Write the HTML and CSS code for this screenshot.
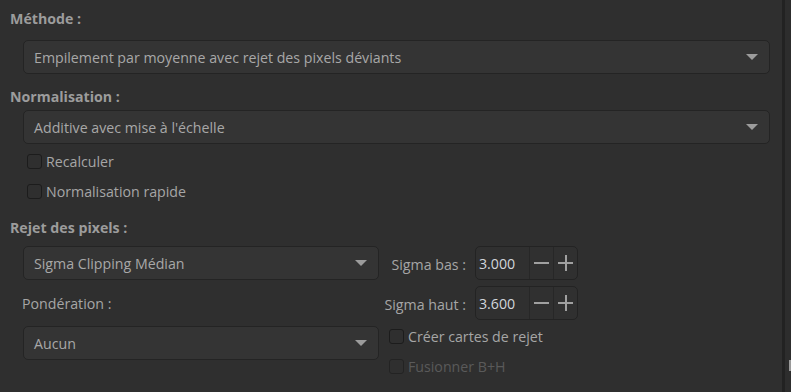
FILE: index.html
```html
<!DOCTYPE html>
<html lang="fr">
<head>
<meta charset="utf-8">
<link rel="stylesheet" href="styles.css">
</head>
<body>
<div class="window">
  <div class="panel">
    <div class="section-title first">Méthode :</div>
    <div class="combo wide"><span>Empilement par moyenne avec rejet des pixels déviants</span><i class="arrow"></i></div>

    <div class="section-title second">Normalisation :</div>
    <div class="combo wide"><span>Additive avec mise à l'échelle</span><i class="arrow"></i></div>
    <div class="checks">
      <label class="check"><i class="box"></i>Recalculer</label>
      <label class="check"><i class="box"></i>Normalisation rapide</label>
    </div>

    <div class="section-title third">Rejet des pixels :</div>
    <div class="rejet">
      <div class="combo"><span>Sigma Clipping Médian</span><i class="arrow"></i></div>
      <div class="spin-label">Sigma bas :</div>
      <div class="spin"><span class="val">3.000</span><span class="btn minus"></span><span class="btn plus"></span></div>

      <div class="plain-label">Pondération :</div>
      <div class="spin-label">Sigma haut :</div>
      <div class="spin"><span class="val">3.600</span><span class="btn minus"></span><span class="btn plus"></span></div>

      <div class="combo"><span>Aucun</span><i class="arrow"></i></div>
      <div class="right-checks">
        <label class="check"><i class="box"></i>Créer cartes de rejet</label>
        <label class="check disabled"><i class="box"></i>Fusionner B+H</label>
      </div>
    </div>
  </div>
  <div class="divider"></div>
  <div class="side"><div class="thumb"></div></div>
</div>
</body>
</html>
```
FILE: styles.css
```css
html, body {
  margin: 0;
  padding: 0;
  background: #2f2f2f;
  height: 392px;
  overflow: hidden;
}
body {
  font-family: "Open Sans", "Noto Sans", sans-serif;
  font-size: 14.2px;
  color: #a6a6a6;
}
.window {
  display: flex;
  height: 392px;
}
.panel {
  width: 770px;
  padding-left: 10px;
  padding-right: 2px;
  box-sizing: content-box;
}
.divider {
  width: 3px;
  background: #222222;
}
.side {
  flex: 1;
  background: #2d2d2d;
  display: flex;
  justify-content: flex-end;
  padding-top: 360px;
}
.thumb {
  width: 2px;
  height: 11px;
  background: #9a9a9a;
}
.section-title {
  font-weight: 700;
  color: #9c9c9c;
  height: 20px;
  line-height: 20px;
}
.section-title.first {
  margin-top: 9px;
  margin-bottom: 11px;
}
.section-title.second {
  margin-top: 13px;
  margin-bottom: 3px;
}
.section-title.third {
  margin-top: 12px;
  margin-bottom: 8px;
}
.combo {
  box-sizing: border-box;
  height: 34px;
  border: 1px solid #242424;
  border-radius: 5px;
  background: #343434;
  display: flex;
  align-items: center;
  justify-content: space-between;
  padding: 0 11px 0 10px;
  color: #a8a8a8;
}
.combo.wide {
  margin-left: 13px;
  width: 747px;
}
.arrow {
  width: 0;
  height: 0;
  border-left: 6px solid transparent;
  border-right: 6px solid transparent;
  border-top: 6px solid #9c9c9c;
}
.checks {
  margin-left: 17px;
  margin-top: 2px;
}
.check {
  display: flex;
  align-items: center;
  height: 30px;
  color: #a6a6a6;
}
.box {
  box-sizing: border-box;
  width: 15px;
  height: 15px;
  border: 1px solid #1c1c1c;
  border-radius: 3px;
  background: #2f2f2f;
  margin-right: 4px;
}
.check.disabled {
  color: #5a5a5a;
}
.check.disabled .box {
  border-color: #232323;
}
.rejet {
  margin-left: 13px;
  display: grid;
  grid-template-columns: 356px 96px 103px;
  grid-template-rows: 34px 34px 34px;
  row-gap: 6px;
}
.spin-label {
  text-align: right;
  padding-right: 9px;
  align-self: center;
  padding-top: 2px;
}
.plain-label {
  align-self: center;
  margin-left: -1px;
}
.spin {
  box-sizing: border-box;
  border: 1px solid #232323;
  border-radius: 5px;
  background: #303030;
  display: flex;
  align-items: stretch;
}
.val {
  flex: 1;
  display: flex;
  align-items: center;
  padding-left: 3px;
  color: #d2d6dc;
}
.btn {
  width: 23px;
  border-left: 1px solid #272727;
  position: relative;
}
.btn::before, .plus::after {
  content: "";
  position: absolute;
  left: 4px;
  right: 4px;
  top: 50%;
  height: 2px;
  margin-top: -1px;
  background: #a0a0a0;
}
.plus::after {
  left: 50%;
  right: auto;
  width: 2px;
  height: 16px;
  margin-top: -8px;
  margin-left: -1px;
}
.right-checks {
  grid-column: 2 / 4;
  padding-left: 10px;
  margin-top: -5px;
}
```
